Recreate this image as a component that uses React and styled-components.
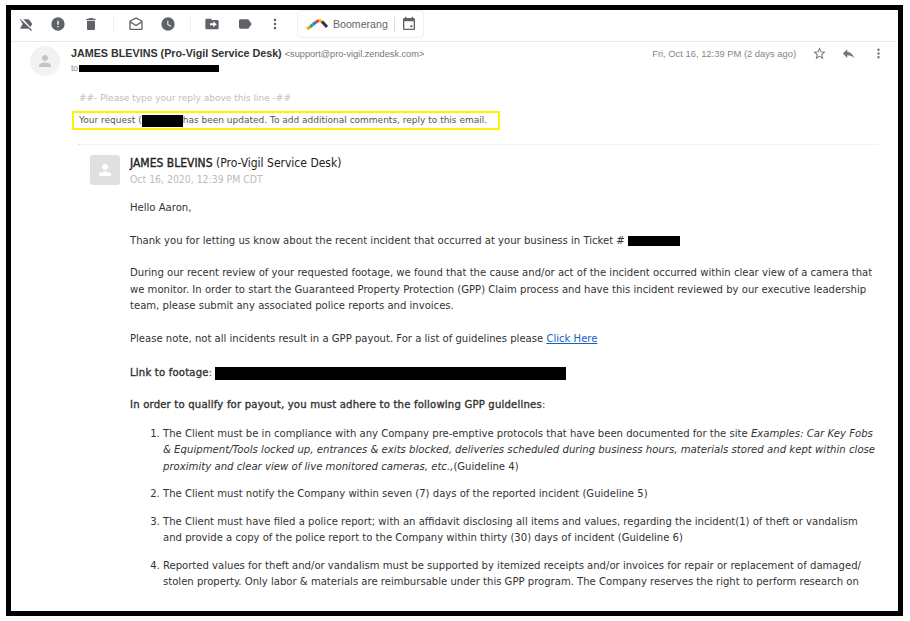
import React from "react";
import styled, { createGlobalStyle } from "styled-components";

const Global = createGlobalStyle`
  html, body { margin: 0; padding: 0; background: #fff; }
  #root { width: 910px; height: 621px; overflow: hidden; }
`;
const Page = styled.div`
  width: 910px; height: 621px; box-sizing: border-box; padding: 5px 7px 5px 6px; background: #fff;
`;
const Frame = styled.div`
  height: 100%; box-sizing: border-box; border: 5px solid #000; background: #fff; overflow: hidden;
  font-family: "DejaVu Sans", sans-serif; color: #3c3c3c;
`;
const Toolbar = styled.div`
  height: 28px; padding: 0 0 3px 7px; margin-right: 3px; border-bottom: 1px solid #e8e8e8; display: flex; align-items: center;
`;
const ToolIcon = styled.svg`
  width: 16px; height: 16px; fill: #5f6368; flex: none; margin-right: ${p => p.$gap}px;
`;
const Sep = styled.div`
  width: 1px; height: 16px; background: #eee; margin-right: ${p => p.$gap}px;
`;
const BoomerangBox = styled.div`
  height: 28px; width: 127px; margin-left: 14px; box-sizing: border-box; border: 1px solid #eee; border-radius: 4px; display: flex; align-items: center; padding-left: 8px;
  font: 10.6px "Liberation Sans", sans-serif; color: #666;
  align-self: flex-start;
`;
const BoomerangLabel = styled.span` margin-left: 4px; `;
const BoxSep = styled.span` width: 1px; height: 15px; background: #ddd; margin: 0 6px; `;
const Header = styled.div`
  display: flex; height: 44px; font-family: "Liberation Sans", sans-serif;
`;
const Avatar = styled.div`
  width: 30px; height: 30px; border-radius: 50%; background: #f2f2f2; margin: 4px 0 0 19px; display: flex; align-items: center; justify-content: center; flex: none;
`;
const HeaderText = styled.div` margin-left: 11px; flex: 1; padding-top: 4px; `;
const SenderLine = styled.div` font-size: 10.5px; line-height: 14px; color: #666; white-space: nowrap; `;
const Sender = styled.b` font-size: 10.75px; color: #333; `;
const Email = styled.span` font-size: 9.2px; margin-left: 3px; color: #777; `;
const ToLine = styled.div` display: flex; align-items: center; font-size: 8.5px; color: #888; height: 14px; `;
const Redact = styled.span`
  display: inline-block; background: #000; vertical-align: middle; width: ${p => p.$w}px; height: ${p => p.$h}px; margin-left: ${p => p.$ml || 0}px;
`;
const Meta = styled.div`
  display: flex; align-items: center; height: 14px; margin-top: 4px; font-size: 9.4px; color: #80868b; white-space: nowrap; margin-right: 12px;
`;
const MetaIcon = styled.svg` width: 15px; height: 15px; fill: #777; margin-left: ${p => p.$ml}px; flex: none; `;
const Hint = styled.div`
  font-size: 9px; color: #bdbdbd; margin: 6px 0 0 68px; line-height: 13px;
`;
const Highlight = styled.div`
  width: 428px; height: 19px; margin: 6px 0 0 61px; box-sizing: border-box; border: 2px solid #fff200; padding-left: 5px;
  font-size: 9px; line-height: 15px; color: #555; white-space: nowrap;
`;
const Comment = styled.div`
  margin: 14px 20px 0 67px; border-top: 1px dotted #e6e6e6; padding-top: 10px; font-stretch: condensed;
`;
const Row = styled.div` display: flex; `;
const Square = styled.div`
  width: 30px; height: 30px; border-radius: 3px; background: #e0e0e0; margin-left: 12px; display: flex; align-items: center; justify-content: center; flex: none;
`;
const Who = styled.div` margin-left: 10px; `;
const Name = styled.div` font-size: 12px; line-height: 16px; color: #222; white-space: nowrap; `;
const Strong = styled.span` -webkit-text-stroke: 0.35px currentColor; `;
const BodyStrong = styled(Strong)` letter-spacing: 0.2px; `;
const When = styled.div` font-size: 10.4px; line-height: 16px; color: #bbb; `;
const Body = styled.div`
  margin: 13px 0 0 52px; font-size: 11.2px; line-height: 16.5px; color: #333;
`;
const P = styled.p` margin: 0 0 ${p => p.$mb ?? 16}px; `;
const A = styled.a` color: #1a5fc4; text-decoration: underline; `;
const List = styled.ol` margin: 0; padding: 0 1px 0 33px; `;
const Item = styled.li` margin: 0 0 11px; `;
const Em = styled.i` font-size: 11.28px; `;

const Ic = ({ d, gap }) => <ToolIcon $gap={gap} viewBox="0 0 24 24"><path d={d} /></ToolIcon>;
const PERSON = "M12 12c2.2 0 4-1.8 4-4s-1.8-4-4-4-4 1.800-4 4 1.800 4 4 4zm0 2c-2.700 0-8 1.300-8 4v2h16v-2c0-2.700-5.300-4-8-4z";

export default function App() {
  return (
    <Page>
      <Global />
      <Frame>
        <Toolbar>
          <Ic gap={16} d="M2.500 3.500 21 21l-1.500 1.500L16 19H3l4-7-4-7zM8 5h8l5.500 7-3 4.500z" />
          <Ic gap={17} d="M12 2a10 10 0 1 0 0 20 10 10 0 0 0 0-20zm1 15h-2v-2h2zm0-4h-2V7h2z" />
          <Ic gap={14} d="M6 19c0 1.100.9 2 2 2h8c1.100 0 2-.9 2-2V7H6zM19 4h-3.500l-1-1h-5l-1 1H5v2h14z" />
          <Sep $gap={14} />
          <Ic gap={16} d="M21.900 8.600c0-.7-.4-1.300-.9-1.700L12 2 3 6.900c-.5.4-1 1-1 1.700V19c0 1.100.9 2 2 2h16c1.100 0 2-.9 2-2zM12 13 4.300 8.200 12 4l7.700 4.200zM4 10.500l8 5 8-5V19H4z" />
          <Ic gap={14} d="M12 2a10 10 0 1 0 0 20 10 10 0 0 0 0-20zm4.200 14.200L11 13V7h1.500v5.200l4.500 2.700z" />
          <Sep $gap={13} />
          <Ic gap={17} d="M20 6h-8l-2-2H4c-1.100 0-2 .9-2 2v12c0 1.100.9 2 2 2h16c1.100 0 2-.9 2-2V8c0-1.100-.9-2-2-2zm-6 11v-3H9v-3h5V8l5 4.500z" />
          <Ic gap={14} d="M17.600 5.800C17.200 5.300 16.600 5 16 5H5c-1.100 0-2 .9-2 2v10c0 1.100.9 2 2 2h11c.6 0 1.200-.3 1.600-.8L22 12z" />
          <Ic gap={0} d="M12 8a2 2 0 1 0 0-4 2 2 0 0 0 0 4zm0 2a2 2 0 1 0 0 4 2 2 0 0 0 0-4zm0 6a2 2 0 1 0 0 4 2 2 0 0 0 0-4z" />
          <BoomerangBox>
            <svg width="23" height="12" viewBox="0 0 23 12">
              <g fill="none" strokeWidth="3">
                <path d="M1 11 4 9" stroke="#f0a020" />
                <path d="M4 9 7 6.500" stroke="#34a853" />
                <path d="M7 6.500 10 4" stroke="#2a7de1" />
                <path d="M10 4 13 2.500" stroke="#e33" />
                <path d="M13 2.500 16 3.500" stroke="#f7b500" />
                <path d="M16 3.500 21 9" stroke="#333" />
              </g>
            </svg>
            <BoomerangLabel>Boomerang</BoomerangLabel>
            <BoxSep />
            <svg width="16" height="16" viewBox="0 0 24 24" fill="#5f6368"><path d="M19 3h-1V1h-2v2H8V1H6v2H5c-1.100 0-2 .9-2 2v14c0 1.100.9 2 2 2h14c1.100 0 2-.9 2-2V5c0-1.100-.9-2-2-2zm0 16H5V8h14zm-5-5h3v3h-3z" /></svg>
          </BoomerangBox>
        </Toolbar>
        <Header>
          <Avatar><svg width="18" height="18" viewBox="0 0 24 24" fill="#c4c4c4"><path d={PERSON} /></svg></Avatar>
          <HeaderText>
            <SenderLine><Sender>JAMES BLEVINS (Pro-Vigil Service Desk)</Sender><Email>&lt;support@pro-vigil.zendesk.com&gt;</Email></SenderLine>
            <ToLine>to<Redact $w={140} $h={7} $ml={1} /></ToLine>
          </HeaderText>
          <Meta>
            Fri, Oct 16, 12:39 PM (2 days ago)
            <MetaIcon $ml={16} viewBox="0 0 24 24"><path d="M22 9.240l-7.190-.62L12 2 9.190 8.630 2 9.240l5.460 4.730L5.820 21 12 17.270 18.180 21l-1.630-7.030zM12 15.400l-3.760 2.270 1-4.280-3.320-2.880 4.380-.38L12 6.100l1.710 4.040 4.380.38-3.320 2.880 1 4.280z" /></MetaIcon>
            <MetaIcon $ml={14} viewBox="0 0 24 24"><path d="M10 9V5l-7 7 7 7v-4.100c5 0 8.500 1.600 11 5.100-1-5-4-10-11-11z" /></MetaIcon>
            <MetaIcon $ml={15} viewBox="0 0 24 24"><path d="M12 8a2 2 0 1 0 0-4 2 2 0 0 0 0 4zm0 2a2 2 0 1 0 0 4 2 2 0 0 0 0-4zm0 6a2 2 0 1 0 0 4 2 2 0 0 0 0-4z" /></MetaIcon>
          </Meta>
        </Header>
        <Hint>##- Please type your reply above this line -##</Hint>
        <Highlight>Your request (<Redact $w={41} $h={12} />has been updated. To add additional comments, reply to this email.</Highlight>
        <Comment>
          <Row>
            <Square><svg width="18" height="18" viewBox="0 0 24 24" fill="#fff"><path d={PERSON} /></svg></Square>
            <Who>
              <Name><Strong>JAMES BLEVINS</Strong> (Pro-Vigil Service Desk)</Name>
              <When>Oct 16, 2020, 12:39 PM CDT</When>
            </Who>
          </Row>
          <Body>
            <P>Hello Aaron,</P>
            <P>Thank you for letting us know about the recent incident that occurred at your business in Ticket # <Redact $w={52} $h={10} /></P>
            <P>During our recent review of your requested footage, we found that the cause and/or act of the incident occurred within clear view of a camera that we monitor. In order to start the Guaranteed Property Protection (GPP) Claim process and have this incident reviewed by our executive leadership team, please submit any associated police reports and invoices.</P>
            <P $mb={18}>Please note, not all incidents result in a GPP payout. For a list of guidelines please <A>Click Here</A></P>
            <P $mb={15}><BodyStrong>Link to footage</BodyStrong>: <Redact $w={351} $h={13} /></P>
            <P $mb={12.5}><BodyStrong>In order to qualify for payout, you must adhere to the following GPP guidelines</BodyStrong>:</P>
            <List>
              <Item>The Client must be in compliance with any Company pre-emptive protocols that have been documented for the site <Em>Examples: Car Key Fobs &amp; Equipment/Tools locked up, entrances &amp; exits blocked, deliveries scheduled during business hours, materials stored and kept within close proximity and clear view of live monitored cameras, etc.,</Em>(Guideline 4)</Item>
              <Item>The Client must notify the Company within seven (7) days of the reported incident (Guideline 5)</Item>
              <Item>The Client must have filed a police report; with an affidavit disclosing all items and values, regarding the incident(1) of theft or vandalism and provide a copy of the police report to the Company within thirty (30) days of incident (Guideline 6)</Item>
              <Item>Reported values for theft and/or vandalism must be supported by itemized receipts and/or invoices for repair or replacement of damaged/ stolen property. Only labor &amp; materials are reimbursable under this GPP program. The Company reserves the right to perform research on</Item>
            </List>
          </Body>
        </Comment>
      </Frame>
    </Page>
  );
}
